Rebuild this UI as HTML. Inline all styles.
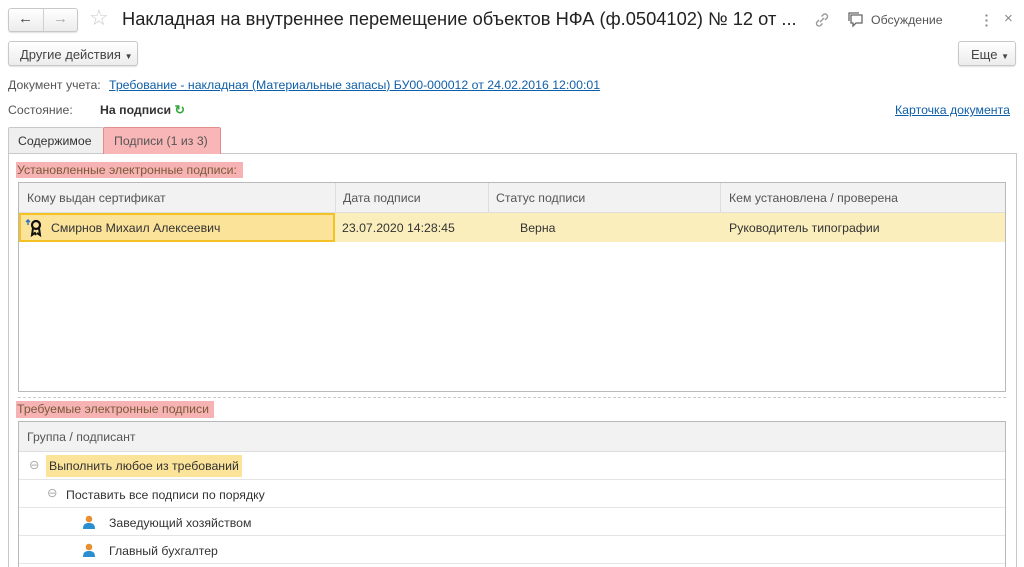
<!DOCTYPE html>
<html><head><meta charset="utf-8"><style>
*{box-sizing:border-box;margin:0;padding:0}
html,body{width:1024px;height:567px;overflow:hidden}
body{background:#fff;font-family:"Liberation Sans",Arial,sans-serif;font-size:12.3px;color:#333;position:relative}
.a{position:absolute}
.btn{position:absolute;border:1px solid #c8c8c8;border-radius:3px;background:linear-gradient(#fff,#ececec);box-shadow:0 1px 1px rgba(0,0,0,.12);color:#444;font-size:13px}
.lnk{color:#0f5fa8;text-decoration:underline}
.tbl{position:absolute;border:1px solid #b9b9b9;background:#fff}
.hd{position:absolute;left:0;right:0;top:0;height:30px;background:#f2f2f2;border-bottom:1px solid #ddd;color:#555}
.hd span,.row span{position:absolute;top:8px;white-space:nowrap}
.row{position:absolute;left:0;right:0;height:28px;border-bottom:1px solid #e4e4e4}
.pink{background:#f7b3b3;color:#7a5a3a}
</style></head><body>
<div class="btn" style="left:8px;top:8px;width:70px;height:24px"></div>
<div class="a" style="left:43px;top:9px;width:1px;height:22px;background:#d0d0d0"></div>
<div class="a" style="left:18px;top:10px;font-size:15px;color:#444">&#8592;</div>
<div class="a" style="left:53px;top:10px;font-size:15px;color:#aaa">&#8594;</div>
<div class="a" style="left:89px;top:5px;font-size:22px;color:#ccc">&#9734;</div>
<div class="a" style="left:122px;top:8px;font-size:18.3px;color:#222;white-space:nowrap">Накладная на внутреннее перемещение объектов НФА (ф.0504102) № 12 от ...</div>
<svg class="a" style="left:813px;top:11px" width="18" height="18" viewBox="0 0 18 18" fill="none" stroke="#999" stroke-width="1.4"><path d="M7 11l4-4M6 9l-2 2a2.5 2.5 0 003.5 3.5l2-2M12 9l2-2a2.5 2.5 0 00-3.5-3.5l-2 2"/></svg>
<svg class="a" style="left:847px;top:12px" width="18" height="16" viewBox="0 0 18 16" fill="none" stroke="#666" stroke-width="1.3"><path d="M4 3h11v8H9l-3 3v-3H4z"/><path d="M2 9V1h10"/></svg>
<div class="a" style="left:871px;top:13px;color:#555">Обсуждение</div>
<div class="a" style="left:985px;top:13px;width:3px;height:14px;background:radial-gradient(circle,#888 1px,transparent 1.3px) 0 0/3px 5px"></div>
<div class="a" style="left:1004px;top:10px;font-size:15px;color:#888">×</div>
<div class="btn" style="left:8px;top:41px;width:130px;height:25px;padding:5px 0 0 11px">Другие действия <span style="font-size:8px">▼</span></div>
<div class="btn" style="left:958px;top:41px;width:58px;height:25px;padding:5px 0 0 12px">Еще <span style="font-size:8px">▼</span></div>
<div class="a" style="left:8px;top:78px;color:#555">Документ учета:</div>
<div class="a lnk" style="left:109px;top:78px">Требование - накладная (Материальные запасы) БУ00-000012 от 24.02.2016 12:00:01</div>
<div class="a" style="left:8px;top:103px;color:#555">Состояние:</div>
<div class="a" style="left:100px;top:103px;font-weight:bold;color:#333">На подписи <span style="color:#2fa53a">&#8635;</span></div>
<div class="a lnk" style="left:895px;top:103px">Карточка документа</div>
<div class="a" style="left:8px;top:153px;width:1009px;height:420px;border:1px solid #c8c8c8"></div>
<div class="a" style="left:8px;top:127px;width:96px;height:27px;border:1px solid #c8c8c8;background:#efefef;border-radius:2px 2px 0 0;padding:6px 0 0 9px;color:#333">Содержимое</div>
<div class="a" style="left:103px;top:127px;width:118px;height:27px;border:1px solid #e28e8e;background:#f9b6b6;border-bottom:none;border-radius:2px 2px 0 0;padding:6px 0 0 10px;color:#555">Подписи (1 из 3)</div>
<div class="a pink" style="left:16px;top:162px;width:227px;height:16px;padding:1px 0 0 1px">Установленные электронные подписи:</div>
<div class="tbl" style="left:18px;top:182px;width:988px;height:210px">
<div class="hd"><span style="left:8px">Кому выдан сертификат</span><span style="left:324px">Дата подписи</span><span style="left:477px">Статус подписи</span><span style="left:710px">Кем установлена / проверена</span></div>
<div class="a" style="left:316px;top:0;width:1px;height:30px;background:#ddd"></div>
<div class="a" style="left:469px;top:0;width:1px;height:30px;background:#ddd"></div>
<div class="a" style="left:701px;top:0;width:1px;height:30px;background:#ddd"></div>
<div class="row" style="top:30px;height:29px;background:#fbeebd;border:none"><span style="left:323px;color:#333">23.07.2020 14:28:45</span><span style="left:501px">Верна</span><span style="left:710px">Руководитель типографии</span></div>
<div class="a" style="left:0;top:30px;width:316px;height:29px;border:2px solid #f4c225;background:#fbe39a"></div>
<svg class="a" style="left:6px;top:36px" width="20" height="18" viewBox="0 0 20 18"><path d="M3 1v5M1 3l2-2 2 2" stroke="#2d6fc2" stroke-width="1.4" fill="none"/><circle cx="11" cy="6" r="4" fill="none" stroke="#111" stroke-width="2.2"/><path d="M8 9l-1 7 3-2 1 2M14 9l1 7-3-2" stroke="#111" stroke-width="2" fill="none"/></svg>
<div class="a" style="left:32px;top:38px;color:#333">Смирнов Михаил Алексеевич</div>
</div>
<div class="a" style="left:18px;top:397px;width:988px;border-top:1px dashed #ccc"></div>
<div class="a pink" style="left:16px;top:401px;width:198px;height:17px;padding:1px 0 0 1px">Требуемые электронные подписи</div>
<div class="tbl" style="left:18px;top:421px;width:988px;height:160px">
<div class="hd"><span style="left:8px">Группа / подписант</span></div>
<div class="row" style="top:30px"><span style="left:10px;color:#aaa;top:6px">⊖</span><span class="a" style="left:27px;top:3px;height:22px;padding:4px 3px;background:#fbe39a">Выполнить любое из требований</span></div>
<div class="row" style="top:58px"><span style="left:28px;color:#aaa;top:6px">⊖</span><span style="left:47px">Поставить все подписи по порядку</span></div>
<div class="row" style="top:86px"><svg class="a" style="left:64px;top:7px" width="12" height="14" viewBox="0 0 12 14"><circle cx="6" cy="4" r="3.3" fill="#e8902f"/><path d="M0 14c0-5 2.5-6 6-6s6 1 6 6z" fill="#2a8fd0"/></svg><span style="left:90px">Заведующий хозяйством</span></div>
<div class="row" style="top:114px"><svg class="a" style="left:64px;top:7px" width="12" height="14" viewBox="0 0 12 14"><circle cx="6" cy="4" r="3.3" fill="#e8902f"/><path d="M0 14c0-5 2.5-6 6-6s6 1 6 6z" fill="#2a8fd0"/></svg><span style="left:90px">Главный бухгалтер</span></div>
</div>
</body></html>
